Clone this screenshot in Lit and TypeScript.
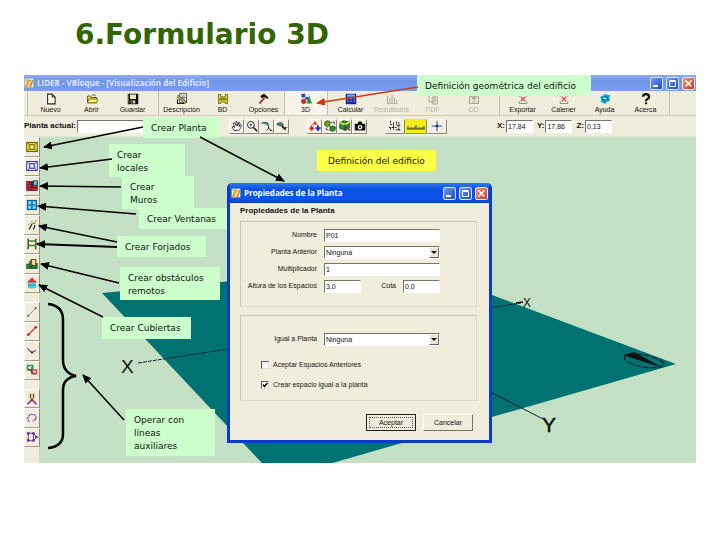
import { LitElement, html, svg, css, TemplateResult, SVGTemplateResult } from "lit";
import { customElement, property } from "lit/decorators.js";
import { classMap } from "lit/directives/class-map.js";

const icons: Record<string, SVGTemplateResult> = {
  app: svg`<rect x="1" y="1" width="14" height="14" fill="#f6efd0"/><path d="M1 15 6 2l4 1-5 12z" fill="#e7a51c"/><path d="M8 14 13 3l2 1-4 11z" fill="#c98a2a"/><path d="M2 5l3-3M9 3l3 2" stroke="#555"/>`,
  nuevo: svg`<path d="M3.5 1.5h6l4 4v9h-10z" fill="#fffff0" stroke="#222" stroke-width="1.4"/><path d="M9.500 1.500v4h4" fill="none" stroke="#222" stroke-width="1.300"/>`,
  abrir: svg`<path d="M2 13V4h4l1 2h7v7z" fill="#e8dc3c" stroke="#55521a" stroke-width="1.2"/><path d="M2 13 4 8h12l-2 5z" fill="#fff66a" stroke="#55521a"/><path d="M8 3q3-2 5 1" fill="none" stroke="#222"/>`,
  guardar: svg`<rect x="1" y="1" width="14" height="14" fill="#111"/><rect x="4" y="2" width="8" height="6" fill="#e9e7c0"/><rect x="5" y="10" width="6" height="4" fill="#ccc"/><rect x="6" y="11" width="2" height="3" fill="#111"/><path d="M2 2v12" stroke="#7a7a20"/>`,
  descripcion: svg`<rect x="5" y="1" width="9" height="12" fill="#fff" stroke="#222"/><path d="M7 4h5M7 6h5M7 8h5" stroke="#444"/><path d="M2 4 13 13" stroke="#222" stroke-width="3.500"/><path d="M2 4 13 13" stroke="#e5d443" stroke-width="1.600"/><path d="M2 8v6h9" fill="none" stroke="#222" stroke-width="1.600"/>`,
  bd: svg`<path d="M2 2h3v3h6V2h3v6H2z" fill="#e8dc20" stroke="#555000"/><path d="M2 9h12v5h-3v-2H5v2H2z" fill="#e8dc20" stroke="#555000"/><path d="M5 7h6" stroke="#555000"/>`,
  opciones: svg`<path d="M3 4 8 1l5 4 1 3-3-1-2-2-4 2z" fill="#111"/><path d="M9 6 2 14" stroke="#b32020" stroke-width="2.5"/>`,
  tresd: svg`<rect x="2" y="1" width="5" height="5" fill="#1b48c9"/><path d="M12 3 16 14H9z" fill="#159043"/><circle cx="5" cy="11" r="3.500" fill="#d22a35"/><circle cx="9" cy="7" r="2" fill="#2545aa"/>`,
  calcular: svg`<rect x="1" y="1" width="14" height="14" fill="#17259c"/><rect x="3" y="2" width="10" height="3" fill="#6fb8ff"/><path d="M3 8h10M3 11h10" stroke="#9cc4ff" stroke-width="1.500" stroke-dasharray="2 2"/>`,
  resultados: svg`<path d="M2 3v11h13M5 13V7M8 13V2M11 13V6M14 13V9" fill="none" stroke="#b4b0a2" stroke-width="1.600"/>`,
  pdf: svg`<path d="M2.500 2.500h7v9h-7zM7 5.500h7v9H7z" fill="#efecdf" stroke="#b4b0a2" stroke-width="1.400"/><path d="M9 8h4M9 10h4M9 12h4" stroke="#b4b0a2"/>`,
  gd: svg`<path d="M2 5h12v9H2zM8 1v7M5 6l3 3 3-3M5 12h6" fill="none" stroke="#aaa697" stroke-width="1.600"/>`,
  exportar: svg`<path d="M3 2h10M3 14h10M3 2v3M13 2v3M3 14v-3M13 14v-3" stroke="#5aa889" stroke-width="1.400"/><path d="M5 5l6 6M11 5l-3 3-3 3" stroke="#d94a4a" stroke-width="1.600"/>`,
  ayuda: svg`<path d="M1 5 6 3l1-2 8 2-1 5 1 3-5 1-1 3-7-3 1-4z" fill="#1cb6dc"/><path d="M4 6l5-1 3 1M4 9h3l1 3M10 9l3-1" stroke="#0a4a86" fill="none" stroke-width="1.600"/><path d="M6 6h3v2H6z" fill="#eaffff"/>`,
  acerca: svg`<path d="M4 5q0-3.500 4-3.500T12 5q0 2-2 3t-2 3" fill="none" stroke="#111" stroke-width="3"/><rect x="6.500" y="12.500" width="3" height="2.500" fill="#111"/>`,
  hand: svg`<path d="M4 14 1.500 9l1-1L5 10 3 4l1.500-.5L7 8 6.500 2 8 2l1 6L10.500 3l1.500.5L11 9l2-3 1 1-2 5-2 2z" fill="#fff" stroke="#222"/>`,
  zoom: svg`<circle cx="6.500" cy="6.500" r="4.500" fill="#fff" stroke="#222" stroke-width="1.300"/><path d="M10 10l5 5" stroke="#222" stroke-width="2.200"/><path d="M4.500 6.500h4M6.500 4.500v4" stroke="#222"/>`,
  orbit: svg`<path d="M1 5q4-4 9 0" fill="none" stroke="#222" stroke-width="1.500"/><path d="M4 4l6 3" stroke="#2aa0a0" stroke-width="2.500"/><path d="M10 7v4l-2 3M10 11l4 3M12 14h3" fill="none" stroke="#222" stroke-width="1.300"/>`,
  pan: svg`<path d="M1 6q4-5 9 0l-3 2z" fill="#3a8f96" stroke="#222"/><path d="M8 8l5 5" stroke="#222" stroke-width="2.400"/><path d="M12 10h3" stroke="#222"/>`,
  shapes: svg`<path d="M8 1 11 6H5z" fill="#e02a2a"/><path d="M3.500 7.500 7 11 3.500 14.500 0 11z" fill="#d22"/><path d="M12 7.500v7M8.500 11h7" stroke="#2038c8" stroke-width="2.600"/><path d="M5 6 3 8M11 6l1 2" stroke="#222"/>`,
  cubes: svg`<path d="M1 3l3-2 4 1v5L5 9 1 7z" fill="#7f9f1a" stroke="#142"/><path d="M8 9l3-1 4 1v4l-3 2-4-1z" fill="#2f8f2a" stroke="#142"/><path d="M9 3h5v3M3 10v3h3" fill="none" stroke="#222"/>`,
  solid: svg`<path d="M1 4l5-3 8 2v7l-5 4-8-3z" fill="#27963a" stroke="#132"/><path d="M1 4l7 2 6-3" fill="none" stroke="#eaea30" stroke-width="2"/><path d="M8 6v8" stroke="#132"/><path d="M9 8l6 6" stroke="#c22" stroke-width="2"/>`,
  camera: svg`<path d="M1 5h4l1-3h4l1 3h4v9H1z" fill="#111"/><circle cx="8" cy="9.500" r="3" fill="#f5f2e4"/><circle cx="8" cy="9.500" r="1.300" fill="#111"/>`,
  grid: svg`<path d="M2 1v5h4M2 10v4M6 3v10M0 10h10M10 2v5h5M13 3v11M9 13h6" fill="none" stroke="#222" stroke-width="1.300" stroke-dasharray="3 1"/>`,
  cross: svg`<path d="M8 1v14M1 8h14" stroke="#2440a8" stroke-width="1.200"/><circle cx="8" cy="8" r="2" fill="#2440a8"/>`,
  planta: svg`<rect x="1" y="2" width="14" height="12" fill="#f0e228" stroke="#6e6810" stroke-width="1.500"/><rect x="5" y="5" width="6" height="6" fill="#fff870" stroke="#6e6810" stroke-width="1.500"/><path d="M1 2l4 3M15 2l-4 3M1 14l4-3M15 14l-4-3" stroke="#6e6810"/>`,
  locales: svg`<rect x="1" y="2" width="14" height="12" fill="#e9e9ff" stroke="#3438a0" stroke-width="1.300"/><rect x="5" y="5" width="6" height="6" fill="#fff9b0" stroke="#3438a0" stroke-width="1.500"/><path d="M1 2l4 3M15 2l-4 3M1 14l4-3M15 14l-4-3" stroke="#3438a0"/>`,
  muros: svg`<rect x="1" y="2" width="14" height="12" fill="#bd2f38" stroke="#401215"/><path d="M1 6h8M1 10h8M5 2v4M3 6v4M7 10v4" stroke="#701c22"/><rect x="10" y="1" width="5" height="6" fill="#4bd4df" stroke="#134"/><path d="M8 2v8h7" fill="none" stroke="#111" stroke-width="1.500"/>`,
  ventanas: svg`<rect x="2" y="2" width="12" height="12" fill="#5ae2f4" stroke="#16569c" stroke-width="1.600"/><path d="M8 2v12M2 8h12" stroke="#16569c" stroke-width="1.600"/>`,
  wand: svg`<path d="M4 14 8 7M10 14l2-6" stroke="#222" stroke-width="1.600"/><path d="M3 8l2-2M7 3l2 1M12 3l2-1M6 7l7-2" stroke="#8a6428" stroke-width="1.300"/>`,
  forjados: svg`<path d="M3 1v14M13 1v14" stroke="#63401f" stroke-width="2"/><path d="M3 4h10M3 10h10" stroke="#398e35" stroke-width="2"/>`,
  obstaculos: svg`<path d="M1 8h4V4h3v6h3V7h4v7H1z" fill="#16853a" stroke="#0b4d1c"/><path d="M7 2h6v8H7z" fill="#f2dfa0" stroke="#6a4312" stroke-width="1.400"/><path d="M5 14l4-5" stroke="#442" stroke-width="2"/>`,
  cubiertas: svg`<path d="M8 1 14 7H2z" fill="#ef2a2a" stroke="#c24040"/><path d="M3.500 7.500h9v7h-9z" fill="#4fdbe8" stroke="#4aa0ac"/><path d="M3 11h10" stroke="#20707c"/>`,
  linea: svg`<path d="M3 13 13 3" stroke="#888" stroke-width="1.200"/><circle cx="3" cy="13" r="1.600" fill="#777"/><circle cx="13" cy="3" r="1.600" fill="#777"/>`,
  lineaRoja: svg`<path d="M3 13 13 3" stroke="#e03434" stroke-width="1.600"/><circle cx="3" cy="13" r="1.800" fill="#c22"/><circle cx="13" cy="3" r="1.800" fill="#c22"/>`,
  poli: svg`<path d="M2 4 5 8l3 2 5-3" fill="none" stroke="#8b3c74" stroke-width="1.500"/><circle cx="8" cy="10" r="1.400" fill="#602"/>`,
  copia: svg`<path d="M2 2h7v6H2z" fill="none" stroke="#2a9a48" stroke-width="2"/><path d="M8 8h6v5H8z" fill="none" stroke="#d44" stroke-width="2"/><path d="M3 6l9 7M7 4v8" stroke="#333"/>`,
  vert: svg`<path d="M8 9 2 15M8 9l6 6" stroke="#7a2a8e" stroke-width="2.200"/><path d="M6 1v6M10 1v6" stroke="#6b5a12" stroke-width="2"/><circle cx="8" cy="9" r="2" fill="#c22"/>`,
  pent: svg`<path d="M4 13 2 8 6 3l6 1 2 5-5 3" fill="none" stroke="#7d3a98" stroke-width="1.600" stroke-dasharray="3 1"/>`,
  nodos: svg`<path d="M3 3h7l4 5-4 5H3zM10 3v10" fill="none" stroke="#7d3a98" stroke-width="1.300"/><path d="M1.500 1.500h3v3h-3zM8.500 1.500h3v3h-3zM1.500 11h3v3h-3zM8.500 11h3v3h-3zM12.500 6.500h3v3h-3z" fill="#42208e"/>`,
};

const icon = (name: string): TemplateResult =>
  html`<svg class="icon" viewBox="0 0 16 16" aria-hidden="true">${icons[name]}</svg>`;

@customElement("window-buttons")
export class WindowButtons extends LitElement {
  static styles = css`
    :host { display: flex; gap: 3px; }
    button {
      width: 13px; height: 13px; padding: 0; border: 1px solid #dfe8fb; border-radius: 2px;
      background: linear-gradient(135deg, #6f9bf2, #1c49c8); display: block;
    }
    button.close { background: linear-gradient(135deg, #ef9a80, #c8361b); }
    svg { display: block; width: 11px; height: 11px; }
  `;
  render() {
    return html`
      <button aria-label="Minimizar"><svg viewBox="0 0 11 11"><path d="M2 8h5" stroke="#fff" stroke-width="2"/></svg></button>
      <button aria-label="Maximizar"><svg viewBox="0 0 11 11"><path d="M2.500 3.500h6v5h-6zM2.500 2.500h6" fill="none" stroke="#fff"/></svg></button>
      <button class="close" aria-label="Cerrar"><svg viewBox="0 0 11 11"><path d="M2.500 2.500l6 6M8.500 2.500l-6 6" stroke="#fff" stroke-width="1.600"/></svg></button>
    `;
  }
}

@customElement("floor-dialog")
export class FloorDialog extends LitElement {
  static styles = css`
    :host {
      display: block; box-sizing: border-box; border: 3px solid #0b3cc4; border-top-width: 0;
      border-radius: 5px 5px 0 0; background: #f1eddd; overflow: hidden;
      font: 7px/12px "Liberation Sans", Arial, sans-serif; color: #111;
    }
    .bar {
      display: flex; align-items: center; gap: 3px; height: 20px; padding: 0 1px 0 1px;
      background: linear-gradient(#2f7bf3, #0a50e0 30%, #0b55ea 80%, #0a3fc0);
      color: #fff; font: bold 8px/12px "Open Sans", sans-serif;
    }
    .bar span { flex: 1; }
    .icon { width: 10px; height: 10px; }
    .body { padding: 2px 12px 9px 10px; }
    h2 { margin: 0 0 4px; font-size: 8px; line-height: 12px; }
    fieldset {
      margin: 0 0 8px; min-width: 0; box-sizing: border-box; height: 86px; padding: 7px 36px 0 0;
      border: 1px solid; border-color: #c9c5b5 #dedaca #dedaca #c9c5b5;
      display: flex; flex-direction: column; gap: 5px;
    }
    fieldset.second { padding-top: 17px; }
    .row { display: flex; align-items: center; gap: 7px; height: 12px; }
    .row label:first-child { width: 76px; text-align: right; }
    .row .far { margin-left: auto; }
    input[type="text"], select {
      box-sizing: border-box; height: 13px; margin: 0; padding: 0 1px; min-width: 0; width: 37px;
      border: 1px solid; border-color: #77746a #fff #fff #77746a; border-radius: 0;
      background: #fff; font: inherit; line-height: 11px; color: #111; appearance: none;
    }
    input.wide, .pick { flex: 1; }
    .pick { position: relative; display: flex; }
    .pick select { flex: 1; }
    .pick svg {
      position: absolute; right: 1px; top: 1px; width: 10px; height: 11px; background: #eae6d6;
      box-sizing: border-box; border: 1px solid; border-color: #fff #666 #666 #fff; pointer-events: none;
    }
    .check { display: flex; align-items: center; gap: 4px; height: 12px; margin-left: 20px; }
    .check.first { margin-top: 9px; }
    .check.last { margin-top: 3px; }
    .mark { position: relative; display: flex; }
    .mark input {
      appearance: none; width: 8px; height: 8px; margin: 0; background: #fff;
      border: 1px solid; border-color: #555 #ddd #ddd #555; box-sizing: border-box;
    }
    .mark svg { position: absolute; inset: 0; width: 8px; height: 8px; pointer-events: none; visibility: hidden; }
    .mark input:checked + svg { visibility: visible; }
    .actions { display: flex; justify-content: flex-end; gap: 7px; padding: 5px 4px 0 0; }
    .actions button {
      width: 50px; height: 17px; padding: 0; font: inherit; color: #111; background: #f1eddd;
      border: 1px solid; border-color: #fff #77746a #77746a #fff;
    }
    .actions button.main { border-color: #222; outline: 1px dotted #555; outline-offset: -4px; }
  `;
  private arrow() {
    return html`<svg viewBox="0 0 8 9" aria-hidden="true"><path d="M1 3h6L4 6z" fill="#111"/></svg>`;
  }
  private tick(label: string, place: string, on: boolean) {
    return html`<label class="check ${place}"><span class="mark"><input type="checkbox" ?checked=${on}><svg viewBox="0 0 8 8"><path d="M2 3.500 3.500 5.500 6.500 2" fill="none" stroke="#111" stroke-width="1.500"/></svg></span>${label}</label>`;
  }
  render() {
    return html`
      <div class="bar">${icon("app")}<span>Propiedades de la Planta</span><window-buttons></window-buttons></div>
      <form class="body" @submit=${(e: Event) => e.preventDefault()}>
        <h2>Propiedades de la Planta</h2>
        <fieldset>
          <div class="row"><label for="nombre">Nombre</label><input id="nombre" class="wide" type="text" .value=${"P01"}></div>
          <div class="row"><label for="anterior">Planta Anterior</label>
            <span class="pick"><select id="anterior"><option>Ninguna</option></select>${this.arrow()}</span></div>
          <div class="row"><label for="mult">Multiplicador</label><input id="mult" class="wide" type="text" .value=${"1"}></div>
          <div class="row"><label for="altura">Altura de los Espacios</label><input id="altura" type="text" .value=${"3,0"}>
            <label class="far" for="cota">Cota</label><input id="cota" type="text" .value=${"0,0"}></div>
        </fieldset>
        <fieldset class="second">
          <div class="row"><label for="igual">Igual a Planta</label>
            <span class="pick"><select id="igual"><option>Ninguna</option></select>${this.arrow()}</span></div>
          ${this.tick("Aceptar Espacios Anteriores", "first", false)}
          ${this.tick("Crear espacio igual a la planta", "last", true)}
        </fieldset>
        <div class="actions"><button class="main">Aceptar</button><button type="button">Cancelar</button></div>
      </form>
    `;
  }
}

type Tool = [string, string, string?];
const toolGroups: Tool[][] = [
  [["nuevo", "Nuevo"], ["abrir", "Abrir"], ["guardar", "Guardar"]],
  [["descripcion", "Descripción"], ["bd", "BD"], ["opciones", "Opciones"]],
  [["tresd", "3D"]],
  [["calcular", "Calcular"], ["resultados", "Resultados", "off"], ["pdf", "PDF", "off"], ["gd", "GD", "off"]],
  [["exportar", "Exportar"], ["exportar", "Calener"], ["ayuda", "Ayuda"], ["acerca", "Acerca"]],
];
const sideGroups = [
  ["planta", "locales", "muros", "ventanas", "wand", "forjados", "obstaculos", "cubiertas"],
  ["linea", "lineaRoja", "poli", "copia"],
  ["vert", "pent", "nodos"],
];

@customElement("lider-window")
export class LiderWindow extends LitElement {
  static styles = css`
    :host { display: block; background: #f1eddd; font: 7px/10px "Liberation Sans", Arial, sans-serif; color: #111; }
    .bar {
      display: flex; align-items: center; gap: 3px; height: 16px; padding: 0 1px 0 0;
      background: linear-gradient(#90aef0, #6f93e8 40%, #7b9fee);
      color: #dbe5fb; font: bold 8px/12px "Open Sans", sans-serif;
    }
    .bar span { flex: 1; }
    .icon { display: block; width: 12px; height: 12px; }
    .bar .icon { width: 10px; height: 10px; }
    .tools {
      display: grid; grid-template-columns: 131px 126px 43px 172px 170px 1fr; height: 25px;
      padding-left: 3px; border-bottom: 1px solid #cfcbbc; box-sizing: border-box;
    }
    .group { display: flex; border-left: 1px solid #c2beaf; padding: 0 0 0 2px; }
    .group:nth-child(3) { padding: 0; background: #f6f3e8; }
    .group button {
      width: 41px; padding: 2px 0 0; border: 0; background: none; font: inherit; color: #111;
      display: flex; flex-direction: column; align-items: center;
    }
    .group button.off { color: #b9b5a6; }
    .options { display: flex; align-items: center; height: 21px; border-bottom: 1px solid #dcebd0; box-sizing: border-box; }
    .options label { font-weight: bold; font-size: 8px; }
    .options input {
      box-sizing: border-box; width: 27px; height: 13px; margin: 0 4px 0 1px; padding: 0 1px;
      border: 1px solid; border-color: #77746a #fff #fff #77746a; background: #fff; font: inherit; color: #111;
    }
    .options input.floor { width: 142px; margin-right: 10px; }
    .options .set { display: flex; margin-right: 18px; }
    .set button {
      box-sizing: border-box; width: 15px; height: 15px; padding: 0; background: #f3f0e2;
      border: 1px solid; border-color: #fff #8b887c #8b887c #fff; display: grid; place-items: center;
    }
    .set button.mid { width: 20px; }
    .set button.ruler { width: 22px; background: #f2ee1c; border-color: #f2ee1c #8b887c #8b887c #f2ee1c; }
    .coords { margin-left: auto; padding-right: 80px; display: flex; align-items: center; }
    .work { display: flex; }
    .side {
      width: 16px; box-sizing: border-box; border-right: 1px solid #d8d4c5; display: flex; flex-direction: column; gap: 9px;
      flex: none; padding-bottom: 16px;
    }
    .stack { display: grid; grid-auto-rows: 1fr; }
    .stack.n8 { height: 156px; }
    .stack.n4 { height: 78px; }
    .stack.n3 { height: 58px; }
    .stack button {
      width: 16px; padding: 0; border: 1px solid; border-color: #fff #8b887c #a19d8f #fff; background: #f1eddd;
      display: grid; place-items: center;
    }
    .scene { flex: 1; min-width: 0; overflow: hidden; background: #c5e1c5; position: relative; }
    .scene svg { position: absolute; left: 0; top: 0; width: 656px; height: 326px; }
  `;
  render() {
    return html`
      <div class="bar">${icon("app")}<span>LIDER - VBloque - [Visualización del Edificio]</span><window-buttons></window-buttons></div>
      <div class="tools">
        ${toolGroups.map((g) => html`<div class="group">${g.map(([i, label, state]) => html`
          <button class=${classMap({ off: state === "off" })} ?disabled=${state === "off"}>${icon(i)}${label}</button>`)}</div>`)}
        <div class="group"></div>
      </div>
      <div class="options">
        <label for="floor">Planta actual:</label><input id="floor" class="floor" type="text">
        <div class="set">${["hand", "zoom", "orbit", "pan"].map((i) => html`<button aria-label=${i}>${icon(i)}</button>`)}</div>
        <div class="set">${["shapes", "cubes", "solid", "camera"].map((i) => html`<button aria-label=${i}>${icon(i)}</button>`)}</div>
        <div class="set">
          <button class="mid" aria-label="Rejilla">${icon("grid")}</button>
          <button class="ruler" aria-label="Regla"><svg width="20" height="12" viewBox="0 0 20 12"><path d="M1 9h18M2 6v3M5 7v2M8 7v2M10 5v4M13 7v2M16 7v2M18 6v3" stroke="#333"/></svg></button>
          <button class="mid" aria-label="Cruz">${icon("cross")}</button>
        </div>
        <div class="coords">
          <label for="cx">X:</label><input id="cx" type="text" .value=${"17,84"}>
          <label for="cy">Y:</label><input id="cy" type="text" .value=${"17,86"}>
          <label for="cz">Z:</label><input id="cz" type="text" .value=${"0,13"}>
        </div>
      </div>
      <div class="work">
        <div class="side">${sideGroups.map((g) => html`<div class="stack n${g.length}">
          ${g.map((i) => html`<button aria-label=${i}>${icon(i)}</button>`)}</div>`)}</div>
        <div class="scene">
          <svg viewBox="40 137 656 326" font-family="Liberation Sans, Arial, sans-serif" fill="#111">
            <path d="M102 293 298 275 492 295 676 364 277 479z" fill="#007272"/>
            <path d="M138 363 521 303" stroke="#123" stroke-width="1" stroke-dasharray="4 1"/>
            <path d="M516 303 523 302" stroke="#111" stroke-width="1.500"/>
            <path d="M420 356 543 419" stroke="#123" stroke-width="1"/>
            <text x="121" y="373" font-size="19">X</text>
            <text x="523" y="307" font-size="12">X</text>
            <text x="542" y="432" font-size="21" stroke="#111" stroke-width="0.500">Y</text>
            <ellipse cx="644" cy="361" rx="20" ry="6" transform="rotate(10 644 361)" fill="none" stroke="#111" stroke-dasharray="6 2"/>
            <path d="M623 355 634 352 663 368z"/>
          </svg>
        </div>
      </div>
    `;
  }
}

@customElement("call-out")
export class CallOut extends LitElement {
  @property() text = "";
  static styles = css`
    :host {
      position: absolute; box-sizing: border-box; padding: 5px 8px 0; background: #ccffcc; color: #111;
      font: 9px/13px "DejaVu Sans", Verdana, sans-serif; white-space: pre-line;
    }
  `;
  render() {
    return html`${this.text}`;
  }
}

const arrows: { from: number[]; to: number[]; wide?: boolean; red?: boolean }[] = [
  { from: [143, 127], to: [44, 147] },
  { from: [112, 159], to: [40, 168] },
  { from: [121, 187], to: [40, 186] },
  { from: [136, 214], to: [38, 206] },
  { from: [117, 242], to: [39, 226] },
  { from: [117, 247], to: [37, 244], wide: true },
  { from: [119, 283], to: [41, 264] },
  { from: [103, 317], to: [39, 285] },
  { from: [124, 420], to: [83, 375] },
  { from: [200, 137], to: [284, 181] },
  { from: [418, 87], to: [317, 103], red: true },
];

@customElement("app-root")
export class AppRoot extends LitElement {
  static styles = css`
    :host { display: block; min-height: 100vh; background: #fff; }
    h1 { margin: 0; padding: 17px 0 22px 75px; font: bold 28px/36px "DejaVu Sans", Verdana, sans-serif; color: #336600; }
    .figure { position: relative; margin: 0 24px; }
    .arrows { position: absolute; left: 0; top: 0; width: 672px; height: 388px; pointer-events: none; }
    floor-dialog { position: absolute; left: 203px; top: 108px; width: 265px; height: 260px; }
    .geom { left: 393px; top: 0; width: 174px; height: 21px; }
    .planta { left: 119px; top: 42px; width: 76px; height: 21px; }
    .locales { left: 85px; top: 69px; width: 76px; height: 33px; }
    .muros { left: 98px; top: 101px; width: 72px; height: 33px; }
    .ventanas { left: 115px; top: 133px; width: 89px; height: 21px; }
    .forjados { left: 93px; top: 161px; width: 89px; height: 21px; }
    .obst { left: 96px; top: 192px; width: 100px; height: 33px; }
    .cubiertas { left: 78px; top: 242px; width: 89px; height: 22px; }
    .operar { left: 102px; top: 334px; width: 89px; height: 47px; }
    .edificio { left: 293px; top: 75px; width: 119px; height: 21px; padding-left: 11px; background: #ffff45; }
  `;
  render() {
    return html`
      <h1>6.Formulario 3D</h1>
      <div class="figure">
        <lider-window></lider-window>
        <call-out class="geom" text="Definición geométrica del edificio"></call-out>
        <call-out class="planta" text="Crear Planta"></call-out>
        <call-out class="locales" text=${"Crear\nlocales"}></call-out>
        <call-out class="muros" text=${"Crear\nMuros"}></call-out>
        <call-out class="ventanas" text="Crear Ventanas"></call-out>
        <call-out class="forjados" text="Crear Forjados"></call-out>
        <call-out class="obst" text=${"Crear obstáculos\nremotos"}></call-out>
        <call-out class="cubiertas" text="Crear Cubiertas"></call-out>
        <call-out class="operar" text=${"Operar con\nlíneas\nauxiliares"}></call-out>
        <call-out class="edificio" text="Definición del edificio"></call-out>
        <svg class="arrows" viewBox="24 75 672 388" aria-hidden="true">
          <defs>
            <marker id="black" markerUnits="userSpaceOnUse" markerWidth="9" markerHeight="8" refX="8" refY="4" orient="auto"><path d="M0 0 9 4 0 8z" fill="#000"/></marker>
            <marker id="red" markerUnits="userSpaceOnUse" markerWidth="9" markerHeight="8" refX="8" refY="4" orient="auto"><path d="M0 0 9 4 0 8z" fill="#d03a10"/></marker>
          </defs>
          ${arrows.map((a) => svg`<line x1=${a.from[0]} y1=${a.from[1]} x2=${a.to[0]} y2=${a.to[1]}
            stroke=${a.red ? "#d03a10" : "#000"} stroke-width=${a.wide ? 2 : 1.5}
            marker-end=${a.red ? "url(#red)" : "url(#black)"}/>`)}
          <path d="M48 304C58 305 63 311 63 320V360Q63 373 76 376Q63 378 63 390V434C63 442 58 447 48 448" fill="none" stroke="#000" stroke-width="2.500"/>
        </svg>
        <floor-dialog></floor-dialog>
      </div>
    `;
  }
}
